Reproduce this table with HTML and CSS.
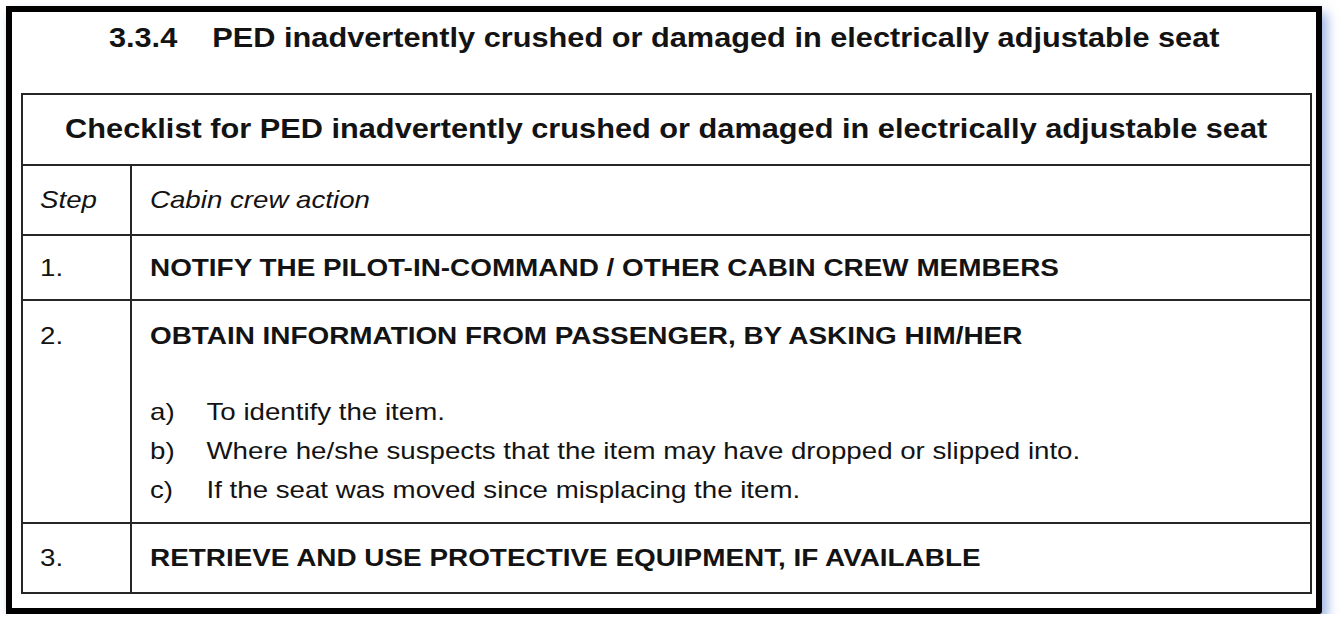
FILE: index.html
```html
<!DOCTYPE html>
<html lang="en">
<head>
<meta charset="utf-8">
<title>3.3.4 PED inadvertently crushed or damaged in electrically adjustable seat</title>
<link rel="stylesheet" href="styles.css">
</head>
<body>
<div class="frame">
  <h1 class="title"><span class="wide-t"><span class="num">3.3.4</span>PED inadvertently crushed or damaged in electrically adjustable seat</span></h1>
  <table class="checklist">
    <tr class="r-head">
      <th colspan="2"><span class="wide-h">Checklist for PED inadvertently crushed or damaged in electrically adjustable seat</span></th>
    </tr>
    <tr class="r-cols">
      <td class="c-step"><span class="wide">Step</span></td>
      <td class="c-act"><span class="wide">Cabin crew action</span></td>
    </tr>
    <tr class="r-1">
      <td class="c-step"><span class="wide">1.</span></td>
      <td class="c-act"><b class="wide-b">NOTIFY THE PILOT-IN-COMMAND / OTHER CABIN CREW MEMBERS</b></td>
    </tr>
    <tr class="r-2">
      <td class="c-step"><span class="wide">2.</span></td>
      <td class="c-act">
        <b class="wide-b lead">OBTAIN INFORMATION FROM PASSENGER, BY ASKING HIM/HER</b>
        <ol class="items">
          <li><span class="wide"><span class="lbl">a)</span>To identify the item.</span></li>
          <li><span class="wide"><span class="lbl">b)</span>Where he/she suspects that the item may have dropped or slipped into.</span></li>
          <li><span class="wide"><span class="lbl">c)</span>If the seat was moved since misplacing the item.</span></li>
        </ol>
      </td>
    </tr>
    <tr class="r-3">
      <td class="c-step"><span class="wide">3.</span></td>
      <td class="c-act"><b class="wide-b">RETRIEVE AND USE PROTECTIVE EQUIPMENT, IF AVAILABLE</b></td>
    </tr>
  </table>
</div>
</body>
</html>
```

FILE: styles.css
```css
html, body {
  margin: 0;
  padding: 0;
  background: #ffffff;
}
body {
  font-family: "Liberation Sans", Arial, sans-serif;
  color: #131313;
}
.frame {
  box-sizing: border-box;
  width: 1316px;
  height: 608px;
  margin: 6px 0 0 6px;
  border: 6px solid #000;
  border-radius: 0 0 3px 0;
  padding: 0 9px;
  background: #fff;
  box-shadow: 5px 7px 12px rgba(110, 145, 215, 0.7);
}
.title {
  margin: 9px 0 38px;
  font-size: 28px;
  line-height: 34px;
  font-weight: bold;
  text-align: center;
  white-space: nowrap;
}
.title .num {
  margin-right: 32px;
}
.wide-t {
  display: inline-block;
  transform: scaleX(1.097);
  transform-origin: center center;
}
.wide-h {
  display: inline-block;
  transform: scaleX(1.138);
  transform-origin: center center;
}
.wide {
  display: inline-block;
  transform: scaleX(1.153);
  transform-origin: left center;
  white-space: nowrap;
}
.wide-b {
  display: inline-block;
  transform: scaleX(1.162);
  transform-origin: left center;
  white-space: nowrap;
}
.checklist {
  width: 1291px;
  border-collapse: collapse;
  border: 2px solid #262626;
  font-size: 24px;
}
.checklist th,
.checklist td {
  box-sizing: border-box;
  border: 2px solid #262626;
  padding: 0;
  text-align: left;
  vertical-align: middle;
}
.r-head th {
  height: 71px;
  font-size: 27px;
  font-weight: bold;
  text-align: center;
  white-space: nowrap;
}
.c-step {
  width: 109px;
  padding-left: 17px !important;
}
.c-act {
  padding-left: 18px !important;
}
.r-cols td {
  height: 70px;
  font-style: italic;
}
.r-1 td {
  height: 65px;
}
.r-2 td {
  height: 223px;
  vertical-align: top;
  padding-top: 21px !important;
}
.lead {
  line-height: 28px;
}
.r-3 td {
  height: 70px;
}
.items {
  list-style: none;
  margin: 42px 0 0;
  padding: 0;
  line-height: 39px;
}
.items .lbl {
  display: inline-block;
  width: 49px;
}
```
